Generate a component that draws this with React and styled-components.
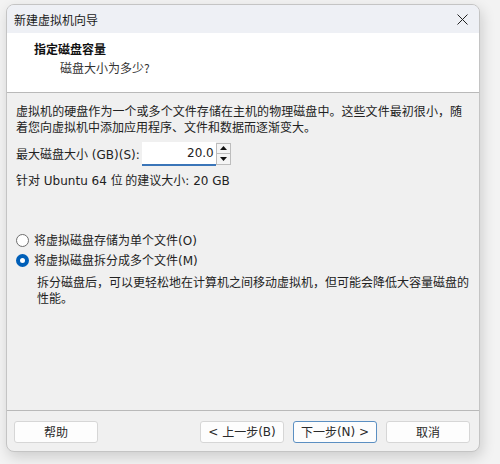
import React from "react";
import styled, { createGlobalStyle } from "styled-components";

const GlobalStyle = createGlobalStyle`
  html, body {
    margin: 0;
    padding: 0;
    background: #f3f3f3;
  }
  body {
    font-family: "Noto Sans CJK SC", "Noto Sans", sans-serif;
    font-size: 12px;
    color: #1c1c1c;
  }
`;

const latin = `"DejaVu Sans", "Noto Sans CJK SC", sans-serif`;

const Page = styled.div`
  width: 500px;
  height: 464px;
  padding: 4px 0 0 6px;
  box-sizing: border-box;
`;

const Window = styled.div`
  width: 474px;
  height: 448px;
  box-sizing: border-box;
  border: 1px solid #c4c4c4;
  border-radius: 8px;
  overflow: hidden;
  background: #f0f0f0;
  display: flex;
  flex-direction: column;
  box-shadow: 2px 5px 14px rgba(0, 0, 0, 0.16);
`;

const TitleBar = styled.div`
  height: 28px;
  flex: none;
  display: flex;
  align-items: center;
  justify-content: space-between;
  padding: 0 11px 0 7px;
  background: #eef0f5;
  font-size: 12px;
  color: #1a1a1a;
`;

const CloseIcon = () => (
  <svg width="11" height="11" viewBox="0 0 11 11">
    <path d="M0.5 0.5L10.5 10.5M10.5 0.5L0.5 10.5" stroke="#222" strokeWidth="1" />
  </svg>
);

const Header = styled.div`
  height: 60px;
  flex: none;
  background: #ffffff;
  border-bottom: 1px solid #b9b9b9;
  padding: 7px 0 0 27px;
  box-sizing: border-box;
`;

const HeaderTitle = styled.div`
  font-weight: bold;
  font-size: 12px;
  line-height: 18px;
  color: #111;
`;

const HeaderSub = styled.div`
  margin: 1px 0 0 26px;
  font-size: 12px;
  line-height: 18px;
  color: #333;
`;

const Body = styled.div`
  flex: 1;
  display: flex;
  flex-direction: column;
  padding: 10px 17px 0 9px;
  font-size: 12px;
  line-height: 16px;
  color: #222;
`;

const Paragraph = styled.div`
  margin: ${(p) => (p.$indent ? "5px -5px 0 21px" : "0")};
`;

const Line = styled.span`
  display: block;
  white-space: nowrap;
  text-align: ${(p) => (p.$justify ? "justify" : "left")};
  text-align-last: ${(p) => (p.$justify ? "justify" : "auto")};
`;

const SizeRow = styled.div`
  margin-top: 7px;
  height: 24px;
  display: flex;
  align-items: center;
`;

const Label = styled.span`
  font-family: ${latin};
  margin-right: 2px;
  white-space: nowrap;
`;

const Cjk = styled.span`
  font-family: "Noto Sans CJK SC", sans-serif;
`;

const NumberInput = styled.div`
  width: 74px;
  height: 24px;
  box-sizing: border-box;
  background: #ffffff;
  border-bottom: 2px solid #3a75b8;
  font-family: ${latin};
  font-size: 12px;
  display: flex;
  align-items: center;
  justify-content: flex-end;
  padding-right: 2px;
`;

const Spinner = styled.div`
  width: 15px;
  height: 22px;
  margin-top: -1px;
  display: flex;
  flex-direction: column;
  border: 1px solid #bdbdbd;
  box-sizing: border-box;
  background: #f5f5f5;
`;

const SpinHalf = styled.div`
  flex: 1;
  display: flex;
  align-items: center;
  justify-content: center;
  & + & {
    border-top: 1px solid #bdbdbd;
  }
`;

const Arrow = ({ up }) => (
  <svg width="7" height="4" viewBox="0 0 7 4">
    <path d={up ? "M0 4L3.5 0L7 4Z" : "M0 0L3.5 4L7 0Z"} fill="#111" />
  </svg>
);

const Suggest = styled.div`
  margin-top: 6px;
  font-family: ${latin};
`;

const RadioGroup = styled.div`
  margin-top: 42px;
  display: flex;
  flex-direction: column;
  gap: 2px;
`;

const RadioRow = styled.label`
  height: 18px;
  display: flex;
  align-items: center;
  gap: 5px;
  font-family: ${latin};
`;

const RadioDot = styled.span`
  width: 13px;
  height: 13px;
  box-sizing: border-box;
  border-radius: 50%;
  flex: none;
  border: ${(p) => (p.$checked ? "4px solid #005fb8" : "1px solid #6e6e6e")};
  background: #ffffff;
`;

const Footer = styled.div`
  height: 40px;
  flex: none;
  border-top: 1px solid #b9b9b9;
  display: flex;
  align-items: center;
  padding: 0 9px 0 7px;
  gap: 9px;
`;

const Button = styled.button`
  width: 84px;
  height: 22px;
  box-sizing: border-box;
  margin-top: 1px;
  margin-left: ${(p) => (p.$push ? "auto" : "0")};
  border: 1px solid ${(p) => (p.$focused ? "#5b8fc2" : "#d6d6d6")};
  border-radius: 3px;
  background: #fdfdfd;
  font-family: ${latin};
  font-size: 12px;
  color: #2a2a2a;
  padding: 0;
  display: flex;
  align-items: center;
  justify-content: center;
`;

export default function App() {
  return (
    <>
      <GlobalStyle />
      <Page>
        <Window>
          <TitleBar>
            <span>新建虚拟机向导</span>
            <CloseIcon />
          </TitleBar>
          <Header>
            <HeaderTitle>指定磁盘容量</HeaderTitle>
            <HeaderSub>磁盘大小为多少?</HeaderSub>
          </Header>
          <Body>
            <Paragraph>
              <Line $justify>
                虚拟机的硬盘作为一个或多个文件存储在主机的物理磁盘中。这些文件最初很小，随
              </Line>
              <Line>着您向虚拟机中添加应用程序、文件和数据而逐渐变大。</Line>
            </Paragraph>
            <SizeRow>
              <Label>
                <Cjk>最大磁盘大小</Cjk> (GB)(S):
              </Label>
              <NumberInput>20.0</NumberInput>
              <Spinner>
                <SpinHalf>
                  <Arrow up />
                </SpinHalf>
                <SpinHalf>
                  <Arrow />
                </SpinHalf>
              </Spinner>
            </SizeRow>
            <Suggest>
              <Cjk>针对</Cjk> Ubuntu 64 <Cjk>位 的建议大小</Cjk>: 20 GB
            </Suggest>
            <RadioGroup>
              <RadioRow>
                <RadioDot />
                <span>
                  <Cjk>将虚拟磁盘存储为单个文件</Cjk>(O)
                </span>
              </RadioRow>
              <RadioRow>
                <RadioDot $checked />
                <span>
                  <Cjk>将虚拟磁盘拆分成多个文件</Cjk>(M)
                </span>
              </RadioRow>
            </RadioGroup>
            <Paragraph $indent>
              <Line $justify>
                拆分磁盘后，可以更轻松地在计算机之间移动虚拟机，但可能会降低大容量磁盘的
              </Line>
              <Line>性能。</Line>
            </Paragraph>
          </Body>
          <Footer>
            <Button>
              <Cjk>帮助</Cjk>
            </Button>
            <Button $push>
              &lt;&nbsp;<Cjk>上一步</Cjk>(B)
            </Button>
            <Button $focused>
              <Cjk>下一步</Cjk>(N)&nbsp;&gt;
            </Button>
            <Button>
              <Cjk>取消</Cjk>
            </Button>
          </Footer>
        </Window>
      </Page>
    </>
  );
}
